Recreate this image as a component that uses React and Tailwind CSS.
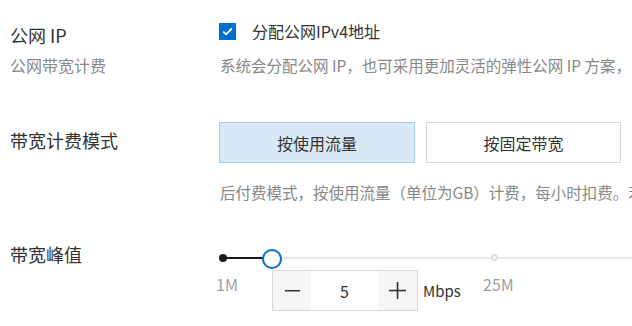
import React from 'react';

const font = "font-['Microsoft_YaHei','Noto_Sans_CJK_SC',sans-serif]";

const App = () => {
  return (
    <div className={`w-[632px] h-[326px] overflow-hidden bg-white text-[#333] ${font}`}>
      {/* 公网 IP */}
      <div className="flex pt-[19px]">
        <div className="w-[219px] shrink-0 pl-[10px]">
          <div className="text-[18px] leading-[32px]">公网 IP</div>
          <div className="mt-[4px] text-[16px] leading-[20px] text-[#888]">公网带宽计费</div>
        </div>
        <div className="min-w-0 flex-1">
          <div className="mt-[2px] flex h-[20px] items-center">
            <span className="flex h-[17px] w-[17px] items-center justify-center bg-[#0070cc]">
              <svg width="11" height="9" viewBox="0 0 11 9" fill="none">
                <path d="M1.2 4.6L4.1 7.3L9.8 1.5" stroke="white" strokeWidth="1.8" />
              </svg>
            </span>
            <span className="ml-[16px] text-[16px] leading-[20px]">分配公网IPv4地址</span>
          </div>
          <div className="mt-[14px] whitespace-nowrap pl-[1px] text-[15.5px] leading-[20px] text-[#888]">
            系统会分配公网 IP，也可采用更加灵活的弹性公网 IP 方案，
          </div>
        </div>
      </div>

      {/* 带宽计费模式 */}
      <div className="mt-[47px] flex">
        <div className="w-[219px] shrink-0 pl-[10px] pt-[6px] text-[18px] leading-[24px]">带宽计费模式</div>
        <div className="min-w-0 flex-1">
          <div className="flex gap-[11px]">
            <button className="h-[41px] w-[196px] border border-[#a9cdee] bg-[#d9e9f6] text-[16px] text-[#333]">
              按使用流量
            </button>
            <button className="h-[41px] w-[195px] border border-[#d6d6d6] bg-white text-[16px] text-[#333]">
              按固定带宽
            </button>
          </div>
          <div className="mt-[19px] whitespace-nowrap pl-[1px] text-[15.5px] leading-[20px] text-[#888]">
            后付费模式，按使用流量（单位为GB）计费，每小时扣费。若
          </div>
        </div>
      </div>

      {/* 带宽峰值 */}
      <div className="mt-[38px] flex">
        <div className="w-[219px] shrink-0 pl-[10px] pt-[2px] text-[18px] leading-[24px]">带宽峰值</div>
        <div className="relative h-[86px] min-w-0 flex-1">
          {/* slider track */}
          <div className="absolute left-[4px] right-0 top-[17px] h-[2px] bg-[#e8e8e8]" />
          <div className="absolute left-[4px] top-[17px] h-[2px] w-[46px] bg-[#1a1a1a]" />
          <div className="absolute left-0 top-[14px] h-[8px] w-[8px] rounded-full bg-[#1a1a1a]" />
          <div className="absolute left-[272px] top-[14px] h-[7px] w-[7px] rounded-full border-2 border-[#dcdcdc] bg-white" />
          <div className="absolute left-[43px] top-[9px] h-[20px] w-[20px] rounded-full border-2 border-[#0a6fcc] bg-white" />
          <div className="absolute left-[-3px] top-[32px] text-[16px] leading-[24px] text-[#a0a0a0]">1M</div>
          <div className="absolute left-[264px] top-[32px] text-[16px] leading-[24px] text-[#a0a0a0]">25M</div>

          {/* number input */}
          <div className="ml-[53px] flex items-center pt-[30px]">
            <div className="flex h-[41px] w-[146px] border border-[#d9d9d9]">
              <button className="flex w-[38px] items-center justify-center bg-[#f5f6f8]">
                <svg width="15" height="2" viewBox="0 0 15 2">
                  <rect width="15" height="1.5" fill="#333" />
                </svg>
              </button>
              <div className="flex flex-1 items-center justify-center bg-white text-[16px]">5</div>
              <button className="flex w-[39px] items-center justify-center bg-[#f5f6f8]">
                <svg width="17" height="17" viewBox="0 0 17 17">
                  <rect x="7.75" y="0" width="1.6" height="17" fill="#333" />
                  <rect x="0" y="7.75" width="17" height="1.6" fill="#333" />
                </svg>
              </button>
            </div>
            <span className="ml-[5px] text-[15px] leading-[20px]">Mbps</span>
          </div>
        </div>
      </div>
    </div>
  );
};

export default App;
